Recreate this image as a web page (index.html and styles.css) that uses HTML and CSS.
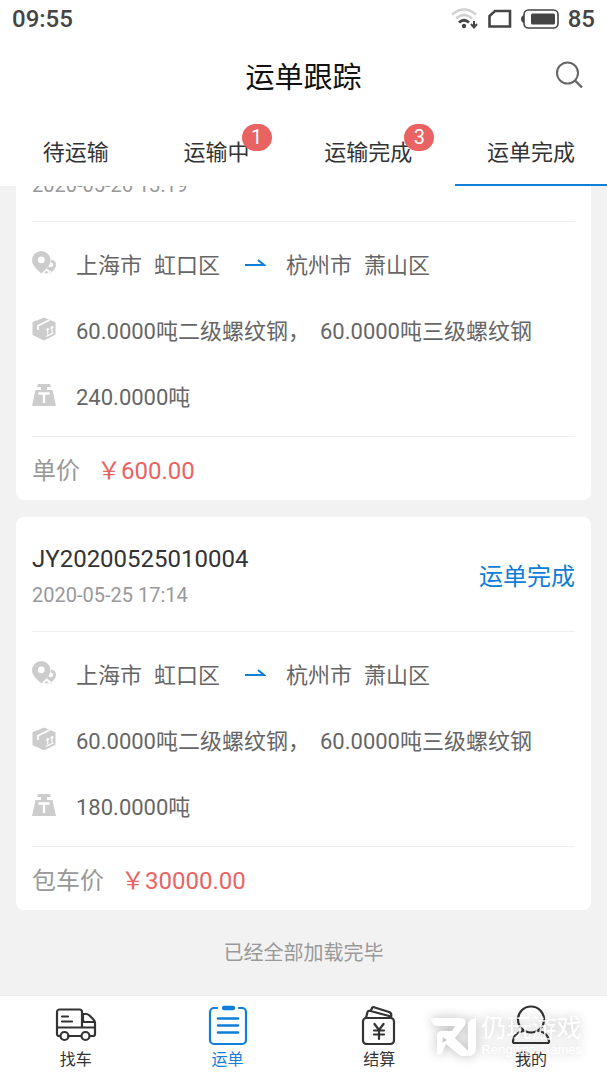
FILE: index.html
```html
<!DOCTYPE html>
<html lang="zh-CN">
<head>
<meta charset="utf-8">
<meta name="viewport" content="width=device-width, initial-scale=1">
<title>运单跟踪</title>
<link rel="stylesheet" href="styles.css">
</head>
<body>
<svg class="sprite" aria-hidden="true">
  <symbol id="i-pin" viewBox="0 0 24 24">
    <path fill-rule="evenodd" d="M9.300 0A9.300 9.300 0 0 0 0 9.300C0 13.500 3.500 17.500 9.300 22.500C15 17.500 18.500 13.500 18.500 9.300A9.300 9.300 0 0 0 9.300 0ZM9.300 5.600a3.300 3.300 0 1 1 0 6.600a3.300 3.300 0 0 1 0-6.600Z"/>
    <path d="M19.500 8.500a5.700 5.700 0 0 1 4.500 5.700c0 2.500-2 4.800-4.500 6.800l-4-3-1-.4 2.200-2.600a2.400 2.400 0 1 0 1.800-3.600Z"/>
    <path d="M12 22.200l2.600-2.400 2.400 2.400zM17.500 22.600l1.300-1.200 1.200 1.200z"/>
  </symbol>
  <symbol id="i-box" viewBox="0 0 24 24">
    <path d="M12 .5 23.500 5.200v12.500L12 23.500.5 18V5.200Z"/>
    <path class="cut" d="M6 13V8.800L17.500 3" stroke-width="1.800"/>
    <path class="cut" d="M15.700 17.500v-5.500M20 15.500V10M14.200 13.500l1.500-2 1.500 1M18.500 11.500l1.500-2 1.500 1M14 19.500l7.500-3.600" stroke-width="1.200"/>
  </symbol>
  <symbol id="i-weight" viewBox="0 0 24 24">
    <path d="M6 1h12l1 3h-4v3h5.500L24 23H0L3.500 7H9V4H5Z"/>
    <path class="cut" d="M6.500 10.500h11M12 10.500V20" stroke-width="2.400"/>
  </symbol>
  <symbol id="i-arrow" viewBox="0 0 22 12"><path d="M1 8h19L14 3"/></symbol>
</svg>
<div class="app">
  <div class="statusbar">
    <span>09:55</span>
    <div class="indicators">
      <svg width="28" height="24" viewBox="0 0 28 24" fill="none" stroke-linecap="butt">
        <path d="M1 7.500q12-10 24 0M5 11.500q8-7 16 0" stroke="#d0d0d0" stroke-width="2.400"/>
        <path d="M8 15.500q5-4.500 10 0" stroke="#454545" stroke-width="2.800"/>
        <circle cx="13" cy="19" r="2.200" fill="#454545"/>
        <path d="M23 14v6M20 17l3 3.500 3-3.500" stroke="#454545" stroke-width="2"/>
      </svg>
      <svg width="24" height="20" viewBox="0 0 24 20"><path d="M7 2h15v15.500H1.500V7Z" fill="none" stroke="#454545" stroke-width="2.600"/></svg>
      <svg width="38" height="20" viewBox="0 0 38 20">
        <rect x="3" y="1" width="34" height="18" rx="4.500" fill="none" stroke="#454545" stroke-width="1.600"/>
        <path d="M3 6Q0 7 0 10t3 4Z" fill="#454545"/><rect x="10" y="4.500" width="24" height="11" rx="1.500" fill="#454545"/>
      </svg>
      <span>85</span>
    </div>
  </div>
  <header class="header">
    <span></span>
    <h1 class="title">运单跟踪</h1>
    <button class="search" aria-label="搜索"><svg width="28" height="28" viewBox="0 0 28 28" fill="none" stroke="#666" stroke-width="2"><circle cx="12.500" cy="12" r="10.500"/><path d="M20 19.500l7 7" stroke-width="2.400"/></svg></button>
  </header>
  <nav class="tabs">
    <button class="tab">待运输</button>
    <button class="tab">运输中<span class="badge">1</span></button>
    <button class="tab">运输完成<span class="badge">3</span></button>
    <button class="tab tab-active">运单完成</button>
  </nav>
  <main class="list">
    <article class="card">
      <div class="card-head">
        <div class="ident"><h2 class="order">JY20200526010001</h2><time class="time">2020-05-26 13:19</time></div>
        <span class="state">运单完成</span>
      </div>
      <div class="rows">
        <div class="row"><svg class="icon"><use href="#i-pin"/></svg><div class="route"><span>上海市</span><span>虹口区</span><svg class="arrow"><use href="#i-arrow"/></svg><span>杭州市</span><span>萧山区</span></div></div>
        <div class="row"><svg class="icon"><use href="#i-box"/></svg><div class="goods"><span>60.0000吨二级螺纹钢，</span><span>60.0000吨三级螺纹钢</span></div></div>
        <div class="row"><svg class="icon"><use href="#i-weight"/></svg><span>240.0000吨</span></div>
      </div>
      <div class="card-foot"><span>单价</span><span class="price">￥600.00</span></div>
    </article>
    <article class="card">
      <div class="card-head">
        <div class="ident"><h2 class="order">JY20200525010004</h2><time class="time">2020-05-25 17:14</time></div>
        <span class="state">运单完成</span>
      </div>
      <div class="rows">
        <div class="row"><svg class="icon"><use href="#i-pin"/></svg><div class="route"><span>上海市</span><span>虹口区</span><svg class="arrow"><use href="#i-arrow"/></svg><span>杭州市</span><span>萧山区</span></div></div>
        <div class="row"><svg class="icon"><use href="#i-box"/></svg><div class="goods"><span>60.0000吨二级螺纹钢，</span><span>60.0000吨三级螺纹钢</span></div></div>
        <div class="row"><svg class="icon"><use href="#i-weight"/></svg><span>180.0000吨</span></div>
      </div>
      <div class="card-foot"><span>包车价</span><span class="price">￥30000.00</span></div>
    </article>
    <p class="end">已经全部加载完毕</p>
  </main>
  <nav class="bottom">
    <a class="item" href="#find">
      <svg class="nav-icon" viewBox="0 0 42 42"><path d="M5 32H4a2 2 0 0 1-2-2V8a2.500 2.500 0 0 1 2.500-2.500h20A2.500 2.500 0 0 1 27 8v15M27 10h4q2 0 3.500 1.500l4 4Q40 17 40 19v11a2 2 0 0 1-2 2h-3M13 32h13M2 23.500h38M28 10v6q0 2 2 2h9M7 12.500h6M7 17.500h10"/><circle cx="9.500" cy="32" r="4"/><circle cx="30.500" cy="32" r="4"/></svg>
      <span>找车</span>
    </a>
    <a class="item item-active" href="#orders">
      <svg class="nav-icon" viewBox="0 0 42 42"><path d="M10 4H7a4 4 0 0 0-4 4v28a4 4 0 0 0 4 4h28a4 4 0 0 0 4-4V8a4 4 0 0 0-4-4h-3"/><path d="M11 14.500h20M11 21.500h20M11 28.500h20" stroke-width="2.600"/><path d="M17 4h9" stroke-width="4.400"/></svg>
      <span>运单</span>
    </a>
    <a class="item" href="#settle">
      <svg class="nav-icon" viewBox="0 0 42 42"><rect x="5" y="14" width="31" height="26" rx="3.500"/><path d="M8 14l1.500-6q.5-1.500 2-1.200L33 12.500M13 6.500l1-2.500q.5-1.300 2-.8l15 4.800q2.500.8 2.300 3L33 14M16.500 20l4.500 6 4.500-6M16 26.500h10M16 30.500h10M21 26v9"/></svg>
      <span>结算</span>
    </a>
    <a class="item" href="#mine">
      <svg class="nav-icon" viewBox="0 0 42 42"><circle cx="21" cy="15.500" r="13"/><path d="M13 27Q4 29 3 37q-.2 2 1.500 2h33q1.700 0 1.500-2Q38 29 29 27"/></svg>
      <span>我的</span>
    </a>
    <div class="watermark">
      <svg width="46" height="40" viewBox="0 0 46 40" fill="#fff"><path fill-rule="evenodd" d="M0 3Q0 1 4 1H29Q36 1 34 8L24 21 38 35Q37 39 32 39 29 39 27 37L15 27 11 36Q6 40 6 36V19Q6 14 11 14H21L24 9H8Q2 9 0 3ZM11.500 20v6l4.500-3Z"/><path d="M37 7Q38 2 45 1V31Q45 39 37 39H32L37 33Z"/></svg>
      <div class="mark-text"><span class="mark-name">仍玩游戏</span><span class="mark-sub">Rengwan Games</span></div>
    </div>
  </nav>
</div>
</body>
</html>
```
FILE: styles.css
```css
* { box-sizing: border-box; }
body { margin: 0; font-family: Roboto, "Noto Sans CJK SC", sans-serif; background: #f2f2f2; color: #333; }
h1, h2, p { margin: 0; font-weight: 400; }
button { border: 0; padding: 0; background: none; font: inherit; color: inherit; }
.sprite { position: absolute; width: 0; height: 0; }
.app { display: flex; flex-direction: column; height: 100vh; overflow: hidden; }

.statusbar { display: flex; justify-content: space-between; align-items: center; height: 38px; padding: 0 12px; background: #fff; color: #454545; font-size: 24px; font-weight: 500; }
.indicators { display: flex; align-items: center; gap: 9px; }

.header { display: grid; grid-template-columns: 1fr auto 1fr; align-items: center; height: 74px; padding: 0 24px; background: #fff; }
.title { font-size: 29px; color: #111; }
.search { justify-self: end; display: flex; }

.tabs { display: grid; grid-template-columns: repeat(4, 1fr); height: 74px; flex: none; background: #fff; font-size: 22px; }
.tab { display: flex; justify-content: center; align-items: center; padding-top: 4px; border-bottom: 2px solid transparent; }
.tab-active { border-bottom-color: #0f7ed8; }
.badge { display: flex; justify-content: center; align-items: center; width: 30px; height: 27px; margin: 0 0 26px -8px; border-radius: 14px; background: #ea6363; color: #fff; font-size: 20px; }

/* The list rests at its end, older cards run out above */
.list { flex: 1; min-height: 0; display: flex; flex-direction: column; justify-content: flex-end; gap: 17px; padding: 0 16px; overflow: hidden; }
.card { flex: none; padding: 0 16px; border-radius: 8px; background: #fff; }
.card-head { display: flex; justify-content: space-between; align-items: center; height: 115px; border-bottom: 1px solid #eee; }
.ident { padding-top: 6px; }
.order { font-size: 24px; line-height: 36px; }
.time { display: block; font-size: 20px; line-height: 36px; color: #999; }
.state { font-size: 24px; color: #0f7ed8; }
.rows { padding: 8px 0; border-bottom: 1px solid #eee; font-size: 22px; color: #666; }
.row { display: flex; align-items: center; gap: 20px; height: 66px; }
.icon { flex: none; width: 24px; height: 24px; fill: #ccc; }
.cut { fill: none; stroke: #fff; }
.route { display: flex; align-items: center; gap: 12px; }
.goods { display: flex; gap: 10px; }
.arrow { width: 22px; height: 12px; margin: 0 8px 0 12px; fill: none; stroke: #0f7ed8; stroke-width: 2; }
.card-foot { display: flex; align-items: center; gap: 17px; height: 63px; font-size: 24px; color: #999; }
.price { color: #ea6363; }
.end { flex: none; height: 68px; line-height: 52px; font-size: 20px; text-align: center; color: #999; }

.bottom { position: relative; flex: none; display: grid; grid-template-columns: repeat(4, 1fr); height: 85px; background: #fff; border-top: 1px solid #eee; }
.item { display: flex; flex-direction: column; align-items: center; gap: 2px; padding-top: 8px; color: #333; font-size: 16px; line-height: 24px; text-decoration: none; }
.item-active { color: #0f7ed8; }
.nav-icon { width: 42px; height: 42px; fill: none; stroke: currentColor; stroke-width: 2.200; stroke-linecap: round; stroke-linejoin: round; }
.watermark { position: absolute; right: 25px; top: 20px; display: flex; align-items: center; gap: 5px; color: #fff; opacity: 0.8; pointer-events: none; filter: drop-shadow(0 0 6px rgba(0, 0, 0, 0.35)); }
.mark-text { display: flex; flex-direction: column; }
.mark-name { font-size: 25px; line-height: 26px; }
.mark-sub { font-family: "Liberation Sans", sans-serif; font-size: 13px; line-height: 16px; }
```
